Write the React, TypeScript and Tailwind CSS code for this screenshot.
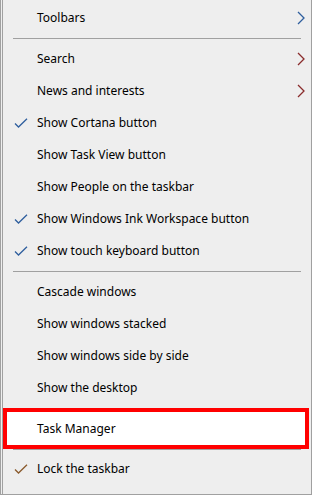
const font = { fontFamily: '"Segoe UI", "Noto Sans", sans-serif' }

type Item = {
  label: string
  checked?: boolean
  checkColor?: string
  chevron?: string
}

const Check = ({ color }: { color: string }) => (
  <svg width="14" height="10" viewBox="0 0 14 10" fill="none">
    <path d="M1 5.5 L4.5 9 L13 0.8" stroke={color} strokeWidth="1.3" />
  </svg>
)

const Chevron = ({ color }: { color: string }) => (
  <svg width="8" height="14" viewBox="0 0 8 14" fill="none">
    <path d="M1 1 L7 7 L1 13" stroke={color} strokeWidth="1.3" />
  </svg>
)

const Row = ({ item }: { item: Item }) => (
  <div className="flex h-[32px] items-center text-[12px] text-black">
    <div className="flex w-[34px] shrink-0 items-center pl-[11px]">
      {item.checked && <Check color={item.checkColor ?? "#2f5f9e"} />}
    </div>
    <div className="flex-1">{item.label}</div>
    {item.chevron && (
      <div className="flex w-[14px] shrink-0 items-center pr-[6px]">
        <Chevron color={item.chevron} />
      </div>
    )}
  </div>
)

const Separator = () => <div className="mx-[10px] h-px bg-[#a0a0a0]" />

const group1: Item[] = [
  { label: "Search", chevron: "#8a2c2c" },
  { label: "News and interests", chevron: "#8a2c2c" },
  { label: "Show Cortana button", checked: true },
  { label: "Show Task View button" },
  { label: "Show People on the taskbar" },
  { label: "Show Windows Ink Workspace button", checked: true },
  { label: "Show touch keyboard button", checked: true },
]

const group2: Item[] = [
  { label: "Cascade windows" },
  { label: "Show windows stacked" },
  { label: "Show windows side by side" },
  { label: "Show the desktop" },
]

export default function App() {
  return (
    <div
      className="h-[495px] w-[312px] border-b border-l border-r border-[#a0a0a0] bg-[#eeeeee]"
      style={font}
    >
      <div className="ml-px h-full border-l border-[#a0a0a0] pt-[2px]">
        <Row item={{ label: "Toolbars", chevron: "#2f5f9e" }} />
        <div className="py-[4px]">
          <Separator />
        </div>
        {group1.map((it) => (
          <Row key={it.label} item={it} />
        ))}
        <div className="py-[4px]">
          <Separator />
        </div>
        {group2.map((it) => (
          <Row key={it.label} item={it} />
        ))}

        {/* highlighted item */}
        <div className="mt-[4px] mr-[2px] flex h-[41px] items-center border-[4px] border-[#ff0000] bg-white text-[12px] text-black">
          <div className="pl-[30px]">Task Manager</div>
        </div>
        <Separator />

        <div className="pt-[3px]">
          <Row item={{ label: "Lock the taskbar", checked: true, checkColor: "#8a5a2c" }} />
        </div>
      </div>
    </div>
  )
}
